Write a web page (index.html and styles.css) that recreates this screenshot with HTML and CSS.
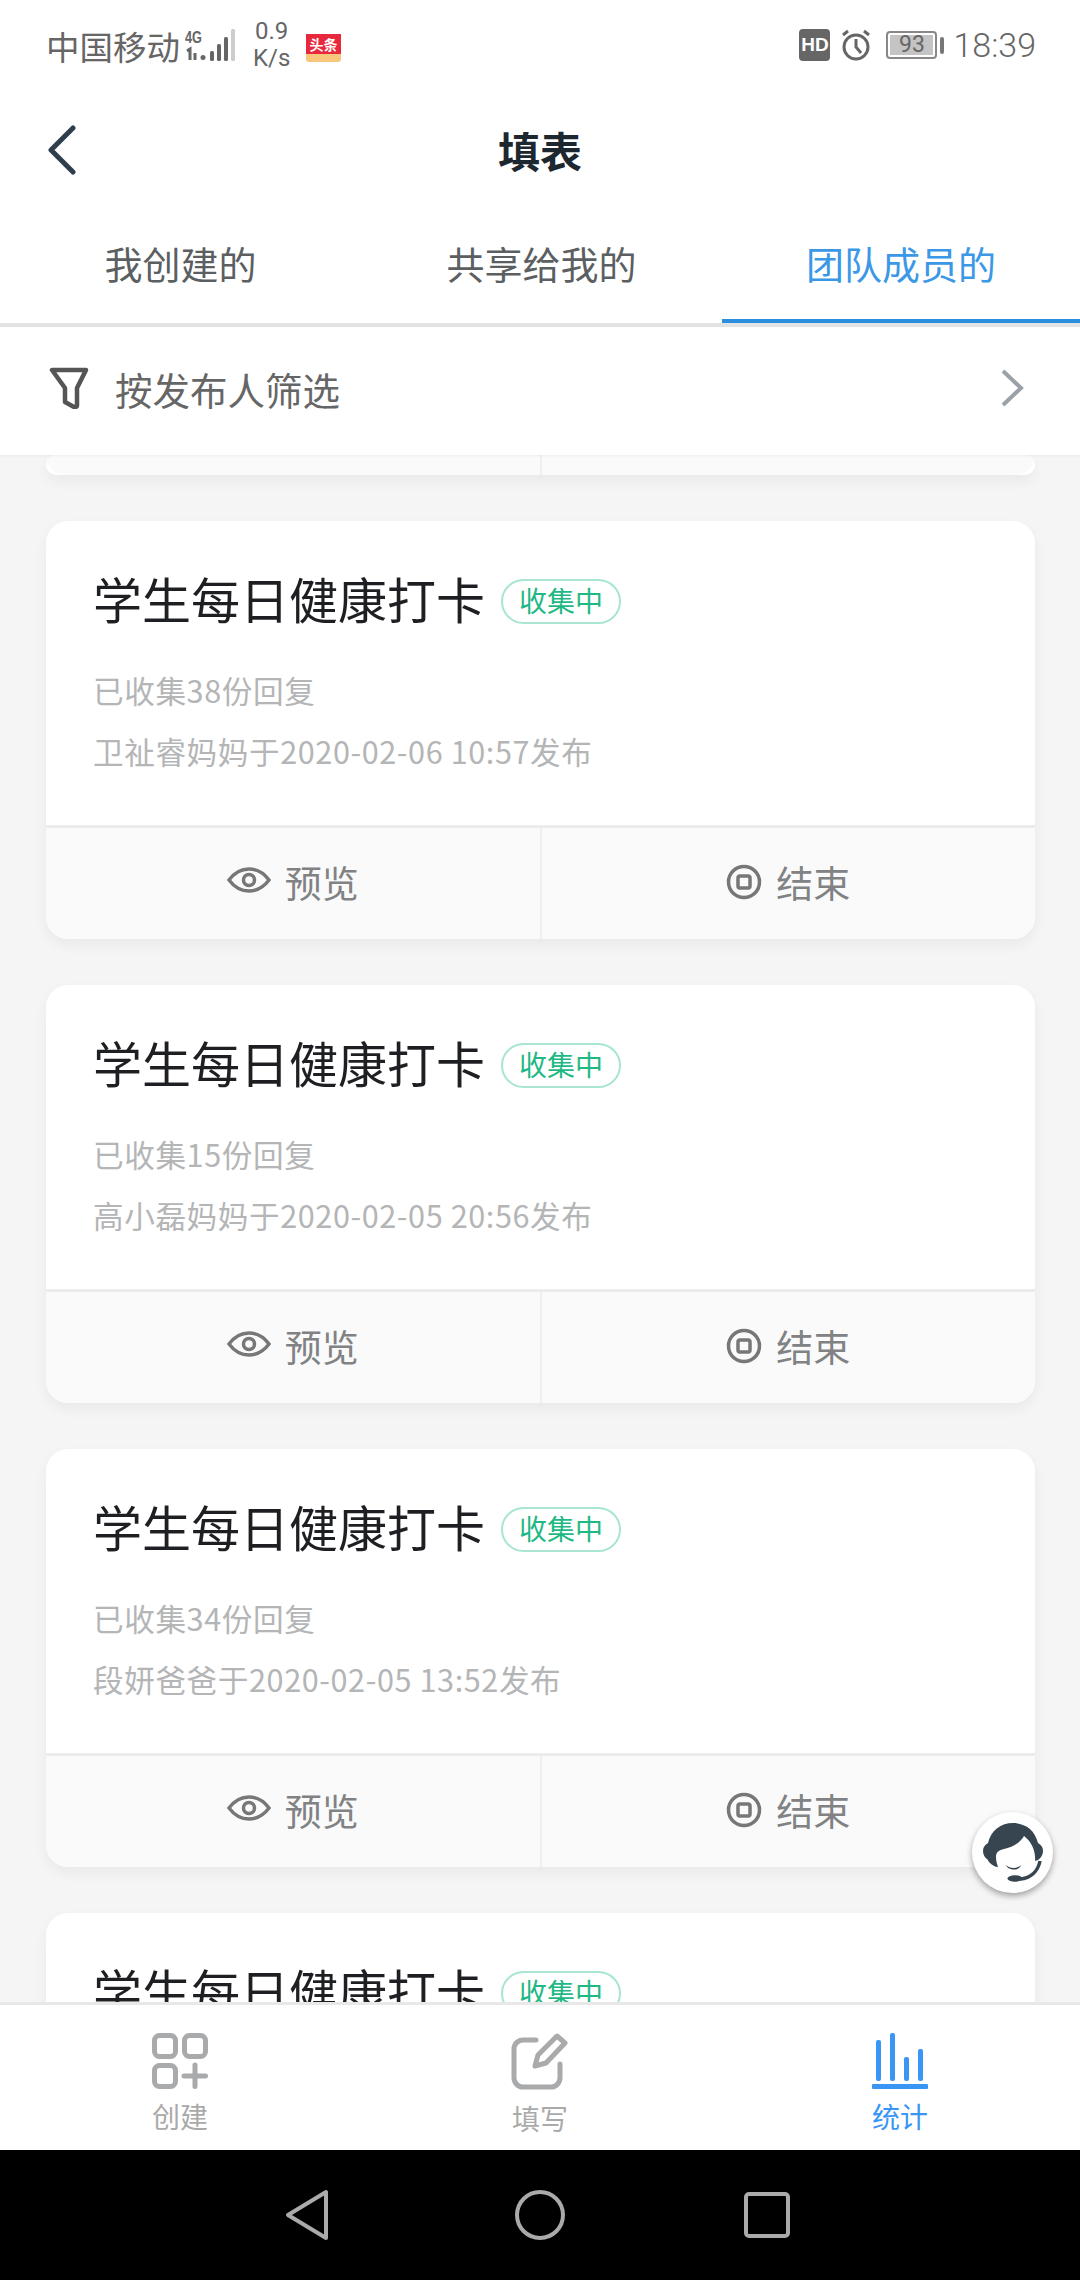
FILE: index.html
```html
<!DOCTYPE html>
<html>
<head>
    <title>填表</title>
    <link rel="stylesheet" href="styles.css">
</head>
<body>
<div class="screen">
    <div class="status-bar">
        <div class="status-left">
            <span class="carrier">中国移动</span>
            <svg class="signal" width="50" height="32" viewBox="0 0 50 32">
                <text x="0" y="14" class="net-text" textLength="17" lengthAdjust="spacingAndGlyphs">4G</text>
                <path d="M2 22l3-2v11M10 24v7" stroke="#666" stroke-width="3" fill="none"/>
                <circle cx="18" cy="28.5" r="2.5" fill="#666"/>
                <rect x="25" y="22" width="4" height="10" rx="1.5" fill="#666"/>
                <rect x="32" y="15" width="4" height="17" rx="1.5" fill="#666"/>
                <rect x="39" y="8" width="4" height="24" rx="1.5" fill="#666"/>
                <rect x="46" y="0" width="4" height="32" rx="1.5" fill="#ccc"/>
            </svg>
            <span class="speed">0.9<br>K/s</span>
            <svg class="toutiao" width="35" height="28" viewBox="0 0 35 28">
                <path d="M0 0h35v19a3 3 0 0 1-3 3H3a3 3 0 0 1-3-3z" fill="#e8283c"/>
                <path d="M0 20h35v5a3 3 0 0 1-3 3H3a3 3 0 0 1-3-3z" fill="#f8c67c"/>
                <text x="17.5" y="16" class="toutiao-text">头条</text>
            </svg>
        </div>
        <div class="status-right">
            <span class="hd">HD</span>
            <svg width="32" height="32" viewBox="0 0 32 32" fill="none" stroke="#666" stroke-width="3">
                <circle cx="16" cy="18" r="12"/>
                <path d="M16 10v8l5 6M3 6l5-4M29 6l-5-4"/>
            </svg>
            <span class="battery"><span class="battery-fill">93</span></span>
            <span class="battery-tip"></span>
            <span class="time">18:39</span>
        </div>
    </div>

    <div class="header">
        <svg class="back" width="32" height="50" viewBox="0 0 32 50" fill="none" stroke="#2e3e4c" stroke-width="5" stroke-linecap="round" stroke-linejoin="round">
            <path d="M26 3L4 25l22 22"/>
        </svg>
        <span class="header-title">填表</span>
    </div>

    <div class="tabs">
        <div class="tab">我创建的</div>
        <div class="tab">共享给我的</div>
        <div class="tab active">团队成员的</div>
    </div>

    <div class="filter">
        <svg width="40" height="42" viewBox="0 0 40 42" fill="none" stroke="#555" stroke-width="4.500" stroke-linejoin="round">
            <path d="M3 3h34L28 21v17a2 2 0 0 1-3 2l-9-5V21z"/>
        </svg>
        <span class="filter-text">按发布人筛选</span>
        <svg class="filter-arrow" width="24" height="38" viewBox="0 0 24 38" fill="none" stroke="#9aa1a8" stroke-width="4">
            <path d="M3 2l18 17L3 36"/>
        </svg>
    </div>

    <div class="list">
        <div class="card card-stub">
            <div class="card-foot"><div class="foot-btn"></div><div class="foot-btn"></div></div>
        </div>

        <div class="card">
            <div class="card-body">
                <div class="card-title"><span>学生每日健康打卡</span><span class="badge">收集中</span></div>
                <div class="card-meta">已收集38份回复</div>
                <div class="card-meta">卫祉睿妈妈于2020-02-06 10:57发布</div>
            </div>
            <div class="card-foot">
                <div class="foot-btn">
                    <svg class="eye" viewBox="0 0 44 26" width="44" height="26" fill="none" stroke="#777" stroke-width="3.5"><path d="M2 13C8 5 14 2 22 2s14 3 20 11c-6 8-12 11-20 11S8 21 2 13z"/><circle cx="22" cy="13" r="5.5"/></svg>
                    预览
                </div>
                <div class="foot-btn">
                    <svg viewBox="0 0 36 36" width="36" height="36" fill="none" stroke="#777" stroke-width="3.5"><circle cx="18" cy="18" r="15.5"/><rect x="12" y="12" width="12" height="12" rx="2"/></svg>
                    结束
                </div>
            </div>
        </div>

        <div class="card">
            <div class="card-body">
                <div class="card-title"><span>学生每日健康打卡</span><span class="badge">收集中</span></div>
                <div class="card-meta">已收集15份回复</div>
                <div class="card-meta">高小磊妈妈于2020-02-05 20:56发布</div>
            </div>
            <div class="card-foot">
                <div class="foot-btn">
                    <svg class="eye" viewBox="0 0 44 26" width="44" height="26" fill="none" stroke="#777" stroke-width="3.5"><path d="M2 13C8 5 14 2 22 2s14 3 20 11c-6 8-12 11-20 11S8 21 2 13z"/><circle cx="22" cy="13" r="5.5"/></svg>
                    预览
                </div>
                <div class="foot-btn">
                    <svg viewBox="0 0 36 36" width="36" height="36" fill="none" stroke="#777" stroke-width="3.5"><circle cx="18" cy="18" r="15.5"/><rect x="12" y="12" width="12" height="12" rx="2"/></svg>
                    结束
                </div>
            </div>
        </div>

        <div class="card">
            <div class="card-body">
                <div class="card-title"><span>学生每日健康打卡</span><span class="badge">收集中</span></div>
                <div class="card-meta">已收集34份回复</div>
                <div class="card-meta">段妍爸爸于2020-02-05 13:52发布</div>
            </div>
            <div class="card-foot">
                <div class="foot-btn">
                    <svg class="eye" viewBox="0 0 44 26" width="44" height="26" fill="none" stroke="#777" stroke-width="3.5"><path d="M2 13C8 5 14 2 22 2s14 3 20 11c-6 8-12 11-20 11S8 21 2 13z"/><circle cx="22" cy="13" r="5.5"/></svg>
                    预览
                </div>
                <div class="foot-btn">
                    <svg viewBox="0 0 36 36" width="36" height="36" fill="none" stroke="#777" stroke-width="3.5"><circle cx="18" cy="18" r="15.5"/><rect x="12" y="12" width="12" height="12" rx="2"/></svg>
                    结束
                </div>
            </div>
        </div>

        <div class="card">
            <div class="card-body">
                <div class="card-title"><span>学生每日健康打卡</span><span class="badge">收集中</span></div>
            </div>
        </div>

        <div class="support">
            <svg width="70" height="70" viewBox="0 0 70 70" fill="#36454f">
                <path d="M5 33c0-4 2-6 5-8C13 12 23 5 35 5s22 7 25 20c3 2 5 4 5 8s-2 7-5 9l-3 1c1-9-3-19-11-25-3 6-12 12-20 13-5 1-8 3-8 8 0 4 1 7 2 10-3 0-6-2-8-4-1-1-2-2-2-3-3-2-5-5-5-9z"/>
                <path d="M28 47c4 4 11 4 15 0-1 6-13 6-15 0z"/>
                <path d="M62 43c-2 10-9 17-20 18" fill="none" stroke="#36454f" stroke-width="3.5"/>
                <ellipse cx="37" cy="60.5" rx="7.5" ry="3.2"/>
            </svg>
        </div>
    </div>

    <div class="tabbar">
        <div class="tabbar-item">
            <svg width="56" height="56" viewBox="0 0 56 56" fill="none" stroke="#a9aaac" stroke-width="5" stroke-linecap="round">
                <rect x="2.5" y="2.5" width="21" height="21" rx="5"/>
                <rect x="32.5" y="2.5" width="21" height="21" rx="5"/>
                <rect x="2.5" y="32.5" width="21" height="21" rx="5"/>
                <path d="M32 43h21.500M43 32v21.500"/>
            </svg>
            <span>创建</span>
        </div>
        <div class="tabbar-item">
            <svg width="58" height="58" viewBox="0 0 58 58" fill="none" stroke="#a9aaac" stroke-width="5" stroke-linecap="round" stroke-linejoin="round">
                <path d="M25 7H12a9 9 0 0 0-9 9v29a9 9 0 0 0 9 9h28a9 9 0 0 0 9-9V31"/>
                <path d="M46 3l8 7-19 20-11 3 3-11z"/>
            </svg>
            <span>填写</span>
        </div>
        <div class="tabbar-item blue">
            <svg width="56" height="56" viewBox="0 0 56 56" fill="#3a96f5">
                <rect x="4" y="7" width="5" height="41" rx="2"/>
                <rect x="18" y="0" width="5" height="48" rx="2"/>
                <rect x="32" y="24" width="5" height="24" rx="2"/>
                <rect x="46" y="16" width="5" height="32" rx="2"/>
                <rect x="0" y="51" width="56" height="5" rx="1"/>
            </svg>
            <span>统计</span>
        </div>
    </div>

    <div class="navbar">
        <svg width="46" height="52" viewBox="0 0 46 52" fill="none" stroke="#aaa" stroke-width="4" stroke-linejoin="round"><path d="M41 3v46L3 26z"/></svg>
        <svg width="50" height="50" viewBox="0 0 50 50" fill="none" stroke="#aaa" stroke-width="4"><circle cx="25" cy="25" r="23"/></svg>
        <svg class="nav-square" width="46" height="46" viewBox="0 0 46 46" fill="none" stroke="#aaa" stroke-width="4"><rect x="2" y="2" width="42" height="42" rx="3"/></svg>
    </div>
</div>
</body>
</html>
```

FILE: styles.css
```css
* {
  box-sizing: border-box;
}
body {
  margin: 0;
  font-family: "Noto Sans CJK SC", "Noto Sans", sans-serif;
  background-color: #f5f5f5;
}
.screen {
  width: 1080px;
  height: 2280px;
  display: flex;
  flex-direction: column;
  overflow: hidden;
}

/* status bar */
.status-bar {
  height: 90px;
  flex: none;
  display: flex;
  justify-content: space-between;
  align-items: center;
  padding: 0 44px 0 46px;
  background: #fff;
  color: #666;
}
.status-left, .status-right {
  display: flex;
  align-items: center;
}
.carrier {
  font-size: 33.5px;
}
.signal {
  margin-left: 5px;
}
.net-text {
  font: bold 17px "Liberation Sans", sans-serif;
  fill: #666;
}
.speed {
  font: 24px/27px Roboto, sans-serif;
  margin-left: 18px;
  text-align: center;
}
.toutiao {
  margin: 6px 0 0 16px;
}
.toutiao-text {
  font-size: 14px;
  font-weight: 700;
  fill: #fff;
  text-anchor: middle;
}
.hd {
  width: 31px;
  height: 32px;
  background: #666;
  border-radius: 4px;
  color: #fff;
  font: bold 19px/32px "Liberation Sans", sans-serif;
  text-align: center;
}
.status-right svg {
  margin-left: 10px;
}
.battery {
  width: 51px;
  height: 28px;
  margin-left: 14px;
  border: 2px solid #888;
  border-radius: 4px;
  padding: 2px;
  display: flex;
}
.battery-fill {
  flex: 1;
  background: #c4c4c4;
  font: 23px/20px Roboto, sans-serif;
  text-align: center;
}
.battery-tip {
  width: 4px;
  height: 17px;
  margin-left: 3px;
  background: #777;
  border-radius: 2px;
}
.time {
  font: 300 34px Roboto, sans-serif;
  margin-left: 9px;
}

/* header + tabs */
.header {
  height: 125px;
  flex: none;
  position: relative;
  display: flex;
  align-items: center;
  justify-content: center;
  padding-bottom: 6px;
  background: #fff;
}
.back {
  position: absolute;
  left: 47px;
  top: 35px;
}
.header-title {
  font-size: 42px;
  font-weight: 700;
  color: #1d2730;
}
.tabs {
  height: 112px;
  flex: none;
  display: flex;
  background: #fff;
  border-bottom: 4px solid #e2e3e3;
}
.tab {
  flex: 1;
  text-align: center;
  font-size: 38px;
  line-height: 96px;
  color: #5c5f62;
}
.tab.active {
  flex: none;
  width: 358px;
  height: 108px;
  color: #3b98e6;
  border-bottom: 4px solid #2b8fe0;
}

.filter {
  height: 128px;
  flex: none;
  display: flex;
  align-items: center;
  padding: 0 56px 6px 49px;
  background: #fff;
  position: relative;
  z-index: 2;
  box-shadow: 0 1px 3px rgba(0, 0, 0, 0.05);
}
.filter-text {
  flex: 1;
  margin-left: 26px;
  font-size: 37.500px;
  color: #666;
}

/* cards */
.list {
  flex: 1;
  min-height: 0;
  overflow: hidden;
  position: relative;
  padding: 0 45px 0 46px;
  display: flex;
  flex-direction: column;
  gap: 46px;
}
.card {
  flex: none;
  display: flex;
  flex-direction: column;
  background: #fff;
  border-radius: 22px;
  box-shadow: 0 6px 14px rgba(0, 0, 0, 0.05);
}
.card-stub {
  height: 20px;
  overflow: hidden;
}
.card-stub .foot-btn {
  height: 20px;
}
.card-body {
  height: 304px;
  flex: none;
  padding: 47px 47px 0;
}
.card-title {
  display: flex;
  align-items: center;
  font-size: 49px;
  line-height: 60px;
  color: #1d1f22;
}
.badge {
  margin: 6px 0 0 16px;
  height: 45px;
  padding: 0 16px;
  border: 2px solid #a8e6cf;
  border-radius: 23px;
  font-size: 28px;
  line-height: 38px;
  color: #1fb985;
}
.card-meta {
  font-size: 30.600px;
  letter-spacing: 0.6px;
  line-height: 61px;
  color: #b4b5b6;
}
.card-title + .card-meta {
  margin-top: 32px;
}
.card-foot {
  height: 114px;
  display: flex;
  border-top: 3px solid #ececec;
  background: #fafafa;
  border-radius: 0 0 22px 22px;
  overflow: hidden;
}
.card-stub .card-foot {
  height: 20px;
  border-top: none;
}
.foot-btn {
  flex: 1;
  display: flex;
  align-items: center;
  justify-content: center;
  gap: 14px;
  padding-bottom: 3px;
  font-size: 37px;
  color: #808284;
}
.foot-btn + .foot-btn {
  border-left: 2px solid #efefef;
}
.eye {
  margin-top: -4px;
}
.support {
  position: absolute;
  left: 972px;
  top: 1357px;
  width: 81px;
  height: 81px;
  border-radius: 50%;
  background: #fff;
  display: flex;
  align-items: center;
  justify-content: center;
  box-shadow: 0 3px 6px rgba(0, 0, 0, 0.35);
}

/* bottom */
.tabbar {
  height: 148px;
  flex: none;
  display: flex;
  background: #fff;
  border-top: 3px solid #e8e8e8;
  position: relative;
}
.tabbar-item {
  flex: 1;
  display: flex;
  flex-direction: column;
  align-items: center;
  padding-top: 28px;
  font-size: 28px;
  line-height: 40px;
  color: #aaa;
}
.tabbar-item span {
  margin-top: 7px;
}
.tabbar-item.blue {
  color: #3a96f5;
}
.navbar {
  height: 130px;
  flex: none;
  background: #000;
  display: flex;
  align-items: center;
  justify-content: center;
  gap: 184px;
  padding-right: 5px;
}
.nav-square {
  margin-left: -5px;
}
```
